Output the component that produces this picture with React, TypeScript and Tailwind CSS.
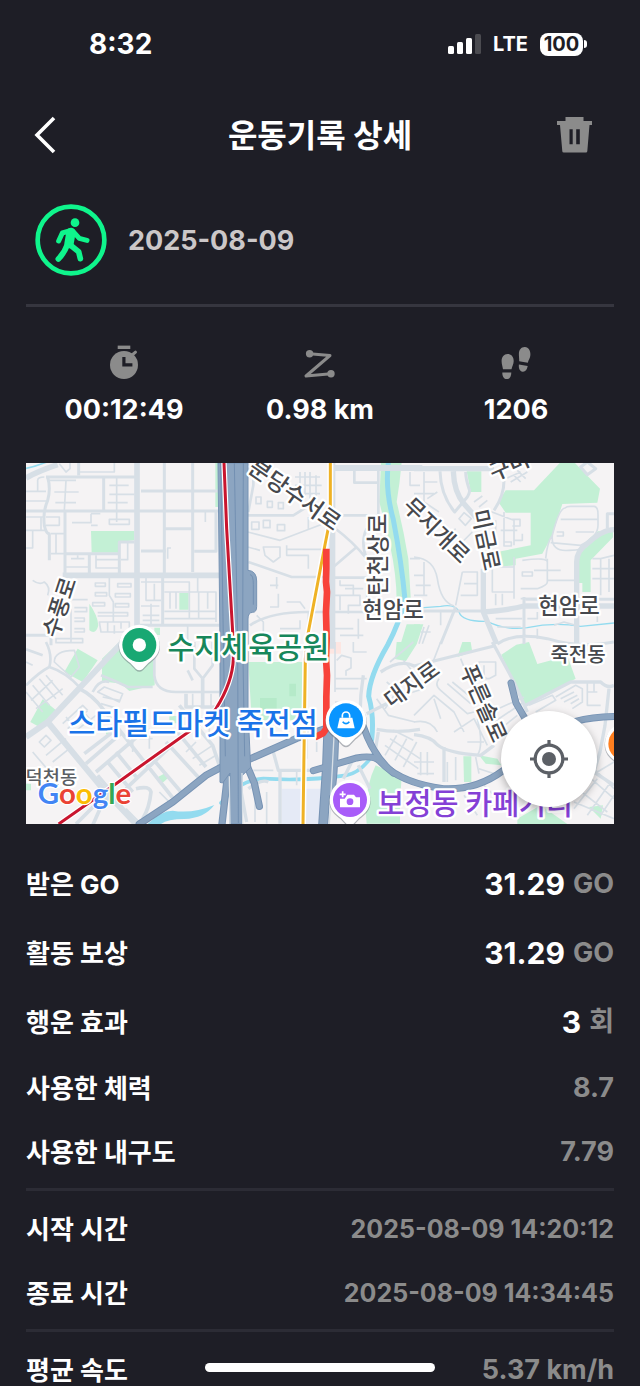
import type { ReactNode } from 'react'

type Stat = { label: string; value: string; icon: ReactNode }

type Row = { label: string; value: string; unit?: string; size?: string }

const rewardRows: Row[] = [
  { label: '받은 GO', value: '31.29', unit: 'GO', size: 'text-[30px] text-white' },
  { label: '활동 보상', value: '31.29', unit: 'GO', size: 'text-[30px] text-white' },
  { label: '행운 효과', value: '3', unit: '회', size: 'text-[30px] text-white' },
]

const usageRows: Row[] = [
  { label: '사용한 체력', value: '8.7' },
  { label: '사용한 내구도', value: '7.79' },
]

const timeRows: Row[] = [
  { label: '시작 시간', value: '2025-08-09 14:20:12', size: 'text-[25px]' },
  { label: '종료 시간', value: '2025-08-09 14:34:45', size: 'text-[25px]' },
]

const speedRows: Row[] = [{ label: '평균 속도', value: '5.37 km/h' }]

const stats: Stat[] = [
  { label: '운동 시간', value: '00:12:49', icon: <StopwatchIcon /> },
  { label: '거리', value: '0.98 km', icon: <RouteIcon /> },
  { label: '걸음 수', value: '1206', icon: <StepsIcon /> },
]

function StopwatchIcon() {
  return (
    <svg viewBox="0 0 36 36" className="h-9 w-9" aria-hidden="true">
      <rect x="11.7" y="0.6" width="12.6" height="3.4" fill="#8b8b8b" />
      <path d="M25.5 10.5l4-3.4" stroke="#8b8b8b" strokeWidth="3" strokeLinecap="round" />
      <circle cx="18" cy="20" r="14" fill="#8b8b8b" />
      <path d="M17.9 12v7.9h8.5" stroke="#1e1e26" strokeWidth="3.2" fill="none" />
    </svg>
  )
}

function RouteIcon() {
  return (
    <svg viewBox="0 0 36 36" className="h-9 w-9" aria-hidden="true">
      <path
        d="M7.6 8.7l20.4 1.8L4 31l25-2.3"
        stroke="#8b8b8b"
        strokeWidth="3"
        strokeLinejoin="round"
        fill="none"
      />
      <circle cx="7.6" cy="8.7" r="3.7" fill="#8b8b8b" />
      <circle cx="29" cy="28.7" r="3.7" fill="#8b8b8b" />
    </svg>
  )
}

function StepsIcon() {
  return (
    <svg viewBox="0 0 36 36" className="h-9 w-9" fill="#8b8b8b" aria-hidden="true">
      <path d="M9.5 9c4 0 6.2 3 6.2 7 0 3.2-1.7 5.5-2.2 8.2H5C4.600 21.500 3.600 19 3.600 16 3.600 12 6 9 9.500 9z" />
      <path d="M4.300 27.500h9c0 4-1.500 6.600-4.500 6.600s-4.500-2.600-4.500-6.600z" />
      <path d="M27 2c-3.600-.2-6 2.700-6.100 6.600-.1 3 .4 5.200.3 7.600l8.600 1.500c.7-2.500 2.400-4.500 2.600-7.600.3-4.300-1.800-7.900-5.400-8.100z" />
      <path d="M20.900 19.500l8.800 1.500c-.7 3.800-2.500 6-5.100 5.700-2.900-.4-4.100-3.200-3.700-7.200z" />
    </svg>
  )
}

function WalkBadge() {
  return (
    <svg viewBox="0 0 216 216" className="h-[72px] w-[72px]" fill="none" aria-hidden="true">
      <circle cx="108" cy="108" r="100" stroke="#0ff58c" strokeWidth="14" />
      <circle cx="120" cy="56" r="13" fill="#0ff58c" />
      <g stroke="#0ff58c" strokeLinecap="round" strokeLinejoin="round">
        <path d="M71 111l11-24 24-7" strokeWidth="15" />
        <path d="M114 82l19 21 23 6" strokeWidth="15" />
        <path d="M108 85l-6 34" strokeWidth="28" />
        <path d="M97 122c-6 17-14 30-27 43" strokeWidth="17" />
        <path d="M103 121l28 22 5 21" strokeWidth="17" />
      </g>
    </svg>
  )
}

function StatusBar() {
  return (
    <div className="flex h-[88px] items-center justify-between pr-[53px] pl-[89px]">
      <span className="text-[28px] font-bold">8:32</span>
      <div className="flex items-center gap-3">
        <svg viewBox="0 0 33 20" className="h-5 w-[33px]" aria-hidden="true">
          <rect x="0" y="12" width="6" height="8" rx="1.500" fill="#fff" />
          <rect x="9" y="8" width="6" height="12" rx="1.500" fill="#fff" />
          <rect x="18" y="4" width="6" height="16" rx="1.500" fill="#fff" />
          <rect x="27" y="0" width="6" height="20" rx="1.500" fill="#4b4b50" />
        </svg>
        <span className="text-[20px] leading-6 font-bold">LTE</span>
        <span className="flex items-center gap-px">
          <span className="flex h-[23px] w-[43px] items-center justify-center rounded-lg bg-white text-[20px] font-bold text-[#1e1e26]">
            100
          </span>
          <span className="h-2 w-[3px] rounded-r-full bg-white" />
        </span>
      </div>
    </div>
  )
}

function Header() {
  return (
    <header className="flex h-[94px] items-center justify-between pr-[46px] pl-[33px]">
      <button type="button" aria-label="뒤로" className="flex w-[51px]">
        <svg viewBox="0 0 24 38" className="h-[38px] w-6" fill="none" aria-hidden="true">
          <path d="M21 2L4 19l17 17" stroke="#fff" strokeWidth="3.600" />
        </svg>
      </button>
      <h1 className="pt-0.5 text-[32px] font-bold">운동기록 상세</h1>
      <button type="button" aria-label="삭제" className="p-px">
        <svg viewBox="0 0 36 36" className="h-9 w-9" fill="#8b8b8b" aria-hidden="true">
          <path d="M8.500 0h18v4H35v4H0V4h8.500z" />
          <path
            fillRule="evenodd"
            d="M3 8h29.500l-2.200 26.200q-.1 1.300-1.400 1.300H6.700q-1.300 0-1.400-1.300zM12.500 12.300v15h3.200v-15zM19.200 12.300v15h3.600v-15z"
          />
        </svg>
      </button>
    </header>
  )
}

type LabelProps = {
  x: number
  y: number
  rotate?: number
  size?: number
  fill?: string
  children: string
}

function MapLabel({ x, y, rotate = 0, size = 67, fill = '#46484d', children }: LabelProps) {
  return (
    <text
      transform={`translate(${x} ${y}) rotate(${rotate})`}
      dy="0.39em"
      textAnchor="middle"
      fontSize={size}
      fontWeight="500"
      fill={fill}
      stroke="#fff"
      strokeWidth="14"
      strokeLinejoin="round"
      paintOrder="stroke"
    >
      {children}
    </text>
  )
}

function Pin({ x, y, color, children }: { x: number; y: number; color: string; children?: ReactNode }) {
  return (
    <g transform={`translate(${x} ${y})`}>
      <path
        d="M-62 4a62 62 0 1 1 124 0c0 28-18 42-34 54L11 76q-11 9-22 0L-28 58C-44 46-62 32-62 4z"
        fill="#5d6670"
        opacity="0.45"
      />
      <path
        d="M-61 0a61 61 0 1 1 122 0c0 28-18 42-34 54L10 72q-10 8-20 0L-27 54C-43 42-61 28-61 0z"
        fill="#fff"
      />
      <circle r="51" fill={color} />
      {children}
    </g>
  )
}

function MapArt() {
  return (
    <svg
      viewBox="0 0 1764 1083"
      className="block w-full font-['Noto_Sans_CJK_KR',sans-serif]"
      role="img"
      aria-label="운동 경로 지도"
    >
      <rect width="1764" height="1083" fill="#f5f3f4" />

      {/* parks */}
      <g fill="#c3f0d5">
        <path d="M195 204h130v28l-47 5v32h-81zM460 390h28v50h-28zM190 422q25 35 27 65-7 30-27 15zM385 494h17v22h-17zM568 0h8v132h-8z" />
        <path
          transform="translate(582 -3)"
          d="M483 0h62q-5 60-15 120 20 80 35 170l8 130h-43q0-80-20-170L478 120zM560 487h50l-20 60-32 50-30-5z"
        />
        <path
          transform="translate(1164 -3)"
          d="M440 0h40l78 80-8 42-105 4-30 94-30 55-80 15v20l-55 4v-44l100-20V152h-75l-22-32 22-35h85zM158 28h44v62h-32zM597 208v18l-67 69v95h-25v-27h-13v-73q8-44 60-82zM0 487h18L0 540z"
        />
        <path
          transform="translate(0 537)"
          d="M155 20l60 35-45 65-55-30zM228 50L280 0h106v130l-76 17-25-22-57-7zM50 172l40 33-50 50-27-15zM392 407l22-12 12 13-16 14zM0 425h15v20H0zM430 222h30v22h-30zM240 262h20v15h-20z"
        />
        <path
          transform="translate(582 537)"
          d="M85 60h162v175H95zM467 370l78 35-5 70v70H440q-10-100 27-175zM530 0h38l-15 40-28 12z"
        />
        <path
          transform="translate(1164 537)"
          d="M262 38l45-30 38-8 25 66 90-24 25 68-150 80-35-60zM145 0h25l5 30-45 15zM148 343h24v77h-22zM195 340l55 10 12 20-47-5zM310 530l70-40 80 56H310zM525 495l42-5-7 40z"
        />
      </g>
      <path d="M767 977h125v106H767z" fill="#e5eaf6" />
      <path d="M910 537h35v35h-35z" fill="#fde6e2" />
      <path d="M702 705h50v40h-50zM790 662h20v38h-20z" fill="#b5eac9" />

      {/* water */}
      <g stroke="#93dbef" fill="none" strokeLinecap="round">
        <path
          d="M1087 0Q1077 80 1102 170 1127 300 1137 410 1120 480 1085 546 1030 640 1028 700 1045 760 1037 830"
          strokeWidth="15"
        />
        <path d="M1045 870Q1005 930 960 937 840 955 712 947 640 950 585 1020" strokeWidth="11" />
        <path d="M0 16Q30 10 62-3" strokeWidth="5" />
        <path
          d="M1194 434l50-4q45-8 55 17 10 30 85 28 50 27 120 19 80-17 160-4l100-10"
          strokeWidth="4"
        />
      </g>
      <path d="M365 1083q40-40 75-40 60 10 125-17-30 40-90 42-50 0-70 15z" fill="#93dbef" />

      {/* streets, one group per map tile */}
      <g fill="none" stroke="#d7dfe6" strokeWidth="5" strokeLinejoin="round">
        <g transform="translate(0 -3)">
          <path d="M333 0v560M110 340h470M0 48q40-22 95-40" strokeWidth="17" />
          <path
            d="M60 45h273M0 147h580M117 147v193M345 87h230M415 0v340M500 0v330M233 45v102M158 0v40M120 275h160v65M280 275v-35h45M190 275v65M418 200h82M345 267h75M505 268h65V147M410 340v150M340 490h240M65 45q10 35 0 70-15 35-10 75 5 25 15 25v80M0 520h75v30"
            strokeWidth="9"
          />
          <path d="M160 30h105V0M100 5l20 25 12-10V0M0 88h60M0 117h60M35 88V55q0-10 20-10M70 55h80M85 90h73M120 55l-5 90M88 122h62M250 70h58M250 97h75M272 45v135M250 172h60v15h-60zM245 122h60M138 182h57v-27M195 155h28M195 190h20M0 165h55M0 205h60M45 165v40M20 205v53H0M75 215h40M75 275h40M90 215v60M60 165h40v25H60M120 315h70M155 280v10M135 290h40M210 280v38h70M210 293h70M285 293h20v-50M538 147v33M425 290v-32h10" />
          <path d="M20 355q20 15 35 5 20 15 10 40M135 413h50M135 440v100M145 437h37v12h-37M145 468h30v10h-30M145 500h30v10h-30M90 530h80v12H90zM250 345v55l12 20v60M208 363h30v10h-30zM275 365h40v10h-40zM208 392h34v10h-34zM268 395h45v10h-45zM200 422h36v10h-36zM268 425h40v10h-40zM215 452h90v10h-90M220 480h90v30H225zM245 480v30M265 490v25M285 480v20" />
          <path d="M360 345v70h45M345 360h145v110M385 365v50M432 390v50M415 390h155v90M450 390v50M545 390v50M515 345v45M415 448h155M345 432h55M350 460h50M350 475h50M375 425v65M518 390v80M415 470h155M485 490v50" />
        </g>
        <g transform="translate(582 -3)">
          <path d="M337 0v560M337 18h270" strokeWidth="18" />
          <path
            d="M475 20v140H340M403 20v42h72M80 160h140l40-25M100 30v40L85 150M85 300l130 45h95M340 347h100M90 490q60-40 170-40h180M340 195q60 45 100 95-20-50 0-90M340 315l70-60"
            strokeWidth="8"
          />
          <path d="M83 210l97 25 130-50M83 255l37 10M108 105h15v20h-15zM142 118h15v18h-15zM175 122h15v18h-15zM95 180h22v22H95zM130 175h20v22h-20zM172 188h22v18h-22zM130 255h50v30l-20 15-25-20zM200 250v30h65v40M200 262h110M265 165v40M170 345v35M150 370h25M175 395v40h-25M200 420h40l15 20M110 460l20 20v30M240 30v80M255 30v80M270 30v80M288 40v70M225 45h75M225 70h80M225 95h75M345 400h55v-30h-40v-15M375 380h55M400 400h20v30h-35v25M345 500h55M440 360v60M570 30v40h30M570 290h30M360 400v45M180 500h60v-25M415 470v60M360 520h70M265 450v50" />
        </g>
        <g transform="translate(1164 -3)">
          <path
            d="M0 20h240M118 28q2 62 32 97l65 75M208 320v130l40 96M205 450q75-5 125-18h270M488 546V300q0-35 32-55 45-42 80-42"
            strokeWidth="16"
          />
          <path
            d="M78 28q2 72 44 122l38-45q10-15 5-25-10-30-10-50M268 30q10 60-28 115M500 15l20-15 25 20-25 18zM580 200v-45h20M330 405v141M125 435L80 546M0 447h205M250 546q50-36 150-16 100 30 200 10M335 412h265"
            strokeWidth="9"
          />
          <path d="M30 30v90l45 30M30 60h40M0 95h60M40 110l30-20M220 145l80 30v75M245 175v65M270 150v100M295 172h23v20h-23M260 205h50M270 240h22v12h-22zM300 235h25v-20M300 285v125M235 315v75h65M250 315h50M265 395v35M145 330l-20 100M145 330h45v70h-50M150 365h40M0 285q60 5 70 65 10 70 50 82M0 340h30M5 370h45M0 400h40M30 300v100M325 295q75-10 75 5M325 330h30v12h-30zM395 290q5-50 20-70 20-80 38-82 5-5 17-5h70q12 0 12 25v32q0 35-52 60l-90-8M440 172h112M485 210h55M428 210h20v12h-20M415 220q-5 50 50 45 50 0 35-15M400 290v70q0 10-30 20h-50M400 355h80M360 325h80M320 410h165M245 395v35M245 470h80M250 495h70M535 290h25l40-10M560 290v110M535 320h65M535 350h65M585 290v100M80 490v-40M340 470h30v-20M420 450q30 20 60 5M550 450v30M135 170l15-18 22 18-18 20zM100 200l30 30M110 215l15-15M145 240l30-30M180 120l25-18M195 135l25-20M275 50l45-20M290 60l50-30M310 25l25 25M300 40l20 20M30 495l-15 50M20 510h30M45 490l-20 55M370 500v30M420 490l30-10 35 10v30" />
        </g>
        <g transform="translate(0 537)">
          <path d="M0 285l65-45L290 0M65 240l165 200 100 106" strokeWidth="18" />
          <path
            d="M160 140q40 20 70 60l110 140 110 140M420 300l110 120M300 440l200-190 80-50M180 365l110-95M210 390l140-120M175 335l85-65M215 400l75 90M245 360l75 90M270 330l65 80M150 546l60-60 90-40M380 350l85 100M450 265l90 110M330 440q40-10 45 10-5 50-25 80M480 155v40h100M530 110v90M460 190l100 120 20 60M240 460l-40 90"
            strokeWidth="11"
          />
          <path
            d="M60 0q20 40 10 75-30 15-70 55M70 75q50 15 95 65M0 22l50 18M385 0v100q5 50 65 50h130M505 0v80l25 30M560 0v70l-30 40M485 85l15 30M225 100q60 25 80 35h75M200 150q20-40 50-30"
            strokeWidth="8"
          />
          <path
            d="M85 60q0-35 60-35l15 50-25 30zM0 150l50 60M20 130l50 60M40 110l50 60M60 100l50 60M15 175l65-60M30 200l80-60M0 60l20 10M215 150l20-15 55 20-10 25zM230 165l50 10M225 185l50 15M110 245l60-55 15 15M125 260l60-55M140 275l30-25M170 250l40-30M120 225l25 30M160 195l30 35M40 300l20-20 15 15-20 20zM60 340l60-50M80 360l50-40M20 330l60 70M300 275h70v45M320 290v40M340 290h40M370 260v60M480 330l30-30M500 350l60-40M520 370l50-30M550 210v80M500 155v40M555 155v40M300 500l40 40M400 450l40 40M270 420l-60 60M100 390l40 40"
          />
        </g>
        <g transform="translate(582 537)">
          <path
            d="M160 330l15 55h125M180 385v160M440 215l110-55M470 262q60 12 130 0M475 270l-10 60M400 350l-30 60M415 370l35 70M430 100q-10 60-10 120M85 440q40-30 60-20M60 430l20 110"
            strokeWidth="10"
          />
          <path d="M345 0v150M345 110h95M400 0v30h40M350 55l15-15 28 8v30l-15 8v15M345 140h70M510 60l70-60M500 120l50 40 60-20M470 170l35 50 80 20M510 290l90 60M530 280l-35 60M560 290l-35 65M590 300l-40 75M495 310l100 70M260 290v60M100 385h60M105 440v100M140 450v95M230 385v45M290 300v30M495 200l30-45M550 55l50 60M345 180h40v30M520 265l60 30" />
        </g>
        <g transform="translate(1164 537)">
          <path
            d="M235 0l65 120 40 90M335 190l135-70h90q20 20 40 10M0 278q50 5 70 30 30 25 130 32l40-30M90 315v105M585 140l-12 110-15 80-18 60 60 40M-100 90q60-40 100-18l240-60"
            strokeWidth="10"
          />
          <path d="M80 0L55 65M140 50l20 50M75 110q-15 20 5 35l80 70 20-5M100 125l70 60M115 120l55 45M60 170l20 60M0 220l60-60 60 50 30 60M0 240q50-10 70 30M120 270l60-40 40 80M190 230q20 80 0 110M160 300h50M195 60h50v40l-20 10h-40zM210 70v30M180 90l40 20M240 240l90-60M210 220l120-55M260 260l50-40M345 190l70-30 10 15-60 35M425 165l60-35 20 10v40l-30 20M440 170l40-20M450 180l40-20M470 185l25-15M520 120v70h40M520 150h30M540 120v30M100 360v60M125 345v70M0 360h60M20 330v70M40 330v70M10 395h50M185 345l10 50M195 380l60 20M500 420l100-60M480 480l120 50M520 400l80 70M490 440l90 70M540 380l60 60M480 500l70-90M520 520l70-100M140 440l60-20M560 520l40-60M210 430l60 60M150 460l40 60" />
        </g>
      </g>

      {/* expressways */}
      <g fill="none" stroke="#7793b4" strokeLinecap="round">
        <path d="M340 1083l100-66 100-80 75-40M672 888l140-62 90-30M655 890l30 70 15 70M600 900l2 60-14 123" strokeWidth="22" />
        <path d="M907 805l-4 110-12 178M925 805q-4 140-12 180" strokeWidth="30" />
        <path d="M862 923l130-38q50-10 70 10 60 65 190 82 100 5 180-55 90-55 140-110 60-50 200-52" strokeWidth="21" />
        <path d="M1012 790q30 90 90 140M1455 660l15 60 35 60" strokeWidth="21" />
      </g>
      <g fill="none" stroke="#8ca5c1" strokeLinecap="round">
        <path d="M340 1083l100-66 100-80 75-40M672 888l140-62 90-30M655 890l30 70 15 70M600 900l2 60-14 123" strokeWidth="16" />
        <path d="M907 805l-4 110-12 178M925 805q-4 140-12 180" strokeWidth="24" />
        <path d="M862 923l130-38q50-10 70 10 60 65 190 82 100 5 180-55 90-55 140-110 60-50 200-52" strokeWidth="16" />
        <path d="M1012 790q30 90 90 140M1455 660l15 60 35 60" strokeWidth="16" />
      </g>
      <path
        d="M576 0h90v322q26 2 26 32v76q0 18-12 18-14 0-14 20v275l8 170-26 25v145h-36V930l-22 30-8-2V540z"
        fill="#8ca5c1"
        stroke="#7793b4"
        strokeWidth="3"
      />
      <g fill="none" stroke="#d7dfe6" strokeWidth="4">
        <path d="M610 940l2 143M924 820l-14 263M648 930l2 153" />
      </g>
      <g fill="none" stroke="#7390b2" strokeWidth="3">
        <path d="M625 0l10 540 2 540M652 0l-2 530 6 350M584 0l8 530 6 350M672 335q10 0 10 30v60" />
      </g>

      {/* rail lines */}
      <g fill="none" strokeLinejoin="round">
        <path
          d="M594 0l8 197 18 310 2 80q-2 70-52 150-35 40-90 75L270 962 98 1083"
          stroke="#fff"
          strokeWidth="16"
        />
        <path
          d="M594 0l8 197 18 310 2 80q-2 70-52 150-35 40-90 75L270 962 98 1083"
          stroke="#c9152e"
          strokeWidth="9"
        />
        <path d="M913 0v165l-15 75-51 267-9 80-7 496" stroke="#fff" strokeWidth="18" />
        <path d="M913 0v165l-15 75-51 267-9 80-7 496" stroke="#efb225" strokeWidth="9" />
      </g>

      <path
        d="M901 257v60l-1 40 3 30-3 60 2 80-2 60 3 50-2 65v95l-10 14-24 12"
        stroke="#f8423a"
        strokeWidth="20"
        fill="none"
        strokeLinejoin="round"
      />

      <MapLabel x={98} y={432} rotate={-72}>수풍로</MapLabel>
      <MapLabel x={808} y={93} rotate={35} size={69}>분당수서로</MapLabel>
      <MapLabel x={1055} y={275} rotate={-90}>탄천상로</MapLabel>
      <MapLabel x={1101} y={440}>현암로</MapLabel>
      <MapLabel x={1233} y={200} rotate={44}>무지개로</MapLabel>
      <MapLabel x={1382} y={230} rotate={78}>미금로</MapLabel>
      <MapLabel x={1449} y={6} rotate={-24}>구미</MapLabel>
      <MapLabel x={1629} y={426}>현암로</MapLabel>
      <MapLabel x={1656} y={573} size={60}>죽전동</MapLabel>
      <MapLabel x={1156} y={662} rotate={-36}>대지로</MapLabel>
      <MapLabel x={1375} y={720} rotate={66}>푸른솔로</MapLabel>
      <MapLabel x={76} y={942} size={56} fill="#5b5e63">덕천동</MapLabel>
      <MapLabel x={667} y={552} size={88} fill="#17875b">수지체육공원</MapLabel>
      <MapLabel x={501} y={780} size={88} fill="#1a73e8">스타필드마켓 죽전점</MapLabel>
      <MapLabel x={1348} y={1020} size={88} fill="#8440d6">보정동 카페거리</MapLabel>

      <Pin x={340} y={546} color="#18a873">
        <circle r="20" fill="#fff" />
      </Pin>
      <Pin x={960} y={772} color="#0a95ff">
        <path d="M-19-8h38l7 32h-52z" fill="#fff" />
        <path d="M-11-8v-6a11 11 0 0 1 22 0v6" stroke="#fff" strokeWidth="5" fill="none" />
        <path d="M-10 4q10 12 20 0" stroke="#0a95ff" strokeWidth="5" fill="none" />
      </Pin>
      <Pin x={972} y={1011} color="#a85cf9">
        <path d="M-8-16h20l6 8h12v30h-60V-4h14z" fill="#fff" />
        <circle cx="0" cy="5" r="10" fill="#a85cf9" />
        <path d="M-22-26v18M-31-17h18" stroke="#fff" strokeWidth="5" />
      </Pin>
      <Pin x={1798} y={842} color="#ff7f1f" />

      <text
        x="35"
        y="1024"
        className="font-[Lato]"
        fontSize="88"
        fontWeight="700"
        stroke="#fff"
        strokeWidth="7"
        paintOrder="stroke"
      >
        <tspan fill="#4285f4">G</tspan>
        <tspan fill="#ea4335">o</tspan>
        <tspan fill="#fbbc05">o</tspan>
        <tspan fill="#4285f4">g</tspan>
        <tspan fill="#34a853">l</tspan>
        <tspan fill="#ea4335">e</tspan>
      </text>
    </svg>
  )
}

function RouteMap() {
  return (
    <div className="relative overflow-hidden">
      <MapArt />
      <button
        type="button"
        aria-label="현재 위치"
        className="absolute right-[17px] bottom-[17px] flex h-24 w-24 items-center justify-center rounded-full bg-white shadow-[0_3px_8px_rgba(0,0,0,0.3)]"
      >
        <svg viewBox="0 0 38 38" className="h-[38px] w-[38px]" fill="none" aria-hidden="true">
          <circle cx="19" cy="19" r="13.800" stroke="#5c6066" strokeWidth="3.200" />
          <circle cx="19" cy="19" r="7" fill="#5c6066" />
          <path d="M19 0v5M19 33v5M0 19h5M33 19h5" stroke="#5c6066" strokeWidth="3.200" />
        </svg>
      </button>
    </div>
  )
}

function DetailRow({ label, value, unit, size = 'text-[27px]' }: Row) {
  return (
    <div className="flex h-8 items-center justify-between">
      <dt className="pt-0.5 text-[26px] font-bold">{label}</dt>
      <dd className="flex items-center gap-2 font-bold text-[#8b8b8b]">
        <span className={size}>{value}</span>
        {unit && <span className="text-[27px]">{unit}</span>}
      </dd>
    </div>
  )
}

export default function App() {
  return (
    <div className="relative min-h-screen bg-[#1e1e26] font-['Inter','Noto_Sans_CJK_KR',sans-serif] leading-8 text-white">
      <StatusBar />
      <Header />
      <main className="px-[26px]">
        <section className="flex items-center gap-[21px] border-b-[3px] border-[#36363f] pt-[22px] pb-7 pl-[9px]">
          <WalkBadge />
          <time dateTime="2025-08-09" className="pt-0.5 text-[27px] font-bold text-[#cbc7c8]">
            2025-08-09
          </time>
        </section>

        <section className="grid grid-cols-3 pt-[38px] pb-[37px]">
          {stats.map((stat) => (
            <div key={stat.label} aria-label={stat.label} className="flex flex-col items-center gap-[13px]">
              {stat.icon}
              <span className="text-[27px] font-bold">{stat.value}</span>
            </div>
          ))}
        </section>

        <RouteMap />

        <dl className="flex flex-col gap-[37px] pt-11">
          {rewardRows.map((row) => (
            <DetailRow key={row.label} {...row} />
          ))}
        </dl>
        <dl className="flex flex-col gap-8 pt-[34px] pb-5">
          {usageRows.map((row) => (
            <DetailRow key={row.label} {...row} />
          ))}
        </dl>
        <dl className="flex flex-col gap-8 border-t-[3px] border-[#2c2c35] pt-[22px] pb-5">
          {timeRows.map((row) => (
            <DetailRow key={row.label} {...row} />
          ))}
        </dl>
        <dl className="border-t-[3px] border-[#2c2c35] pt-[22px]">
          {speedRows.map((row) => (
            <DetailRow key={row.label} {...row} />
          ))}
        </dl>
      </main>

      {/* home indicator */}
      <div className="fixed bottom-[14px] left-1/2 h-[9px] w-[230px] -translate-x-1/2 rounded-full bg-white" />
    </div>
  )
}
